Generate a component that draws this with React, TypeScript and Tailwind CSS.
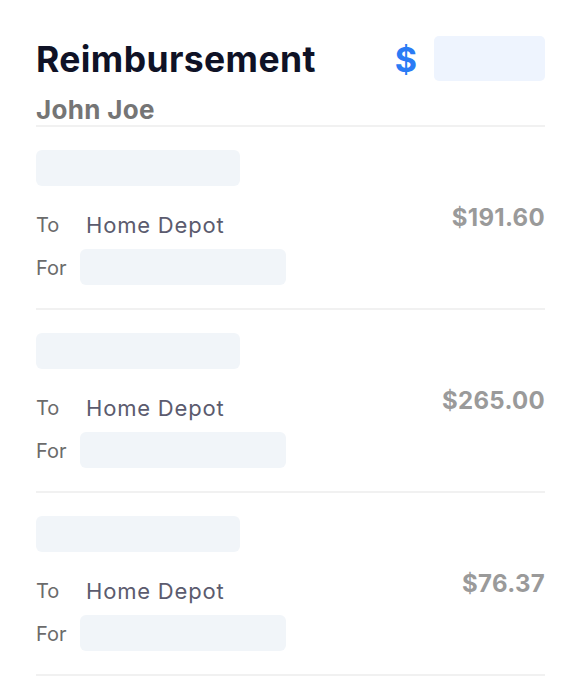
import React from "react";

const rows = [
  { amount: "$191.60" },
  { amount: "$265.00" },
  { amount: "$76.37" },
];

export default function App() {
  return (
    <div className="w-[581px] h-[695px] bg-white" style={{ fontFamily: "Inter, 'Noto Sans', sans-serif" }}>
      <div className="px-[36px] pt-[36px]">
        <div className="flex items-start justify-between">
          <h1 className="text-[35.5px] leading-[48px] font-bold text-[#0f1226] tracking-[0.4px]">Reimbursement</h1>
          <div className="flex items-start gap-[17px]">
            <span className="text-[34px] leading-[48px] font-bold text-[#2a7bf5]">$</span>
            <div className="w-[111px] h-[45px] rounded-[5px] bg-[#eef4fe]" />
          </div>
        </div>
        <div className="text-[26px] leading-[30px] font-bold text-[#757575] mt-[11px] tracking-[0.3px]">John Joe</div>
        <div className="h-[2px] bg-[#f1f1f1]" />
        {rows.map((r, i) => (
          <div key={i}>
            <div className="flex justify-between pt-[23px] pb-[23px]">
              <div className="flex flex-col">
                <div className="w-[204px] h-[36px] rounded-[6px] bg-[#f1f5f9]" />
                <div className="flex items-center mt-[24px] h-[28px]">
                  <span className="w-[50px] text-[20px] leading-[28px] text-[#6b6b6b] mt-[2px]">To</span>
                  <span className="text-[22px] leading-[28px] tracking-[0.8px] text-[#5b5b6e] mt-[1px]">Home Depot</span>
                </div>
                <div className="flex items-center mt-[11px]">
                  <span className="w-[44px] text-[20px] text-[#6b6b6b] mt-[2px]">For</span>
                  <div className="w-[206px] h-[36px] rounded-[6px] bg-[#f1f5f9]" />
                </div>
              </div>
              <div className="text-[24px] font-bold text-[#9a9a9a] mt-[53px] leading-[30px] tracking-[0.3px]">{r.amount}</div>
            </div>
            <div className="h-[2px] bg-[#f1f1f1]" />
          </div>
        ))}
      </div>
    </div>
  );
}
